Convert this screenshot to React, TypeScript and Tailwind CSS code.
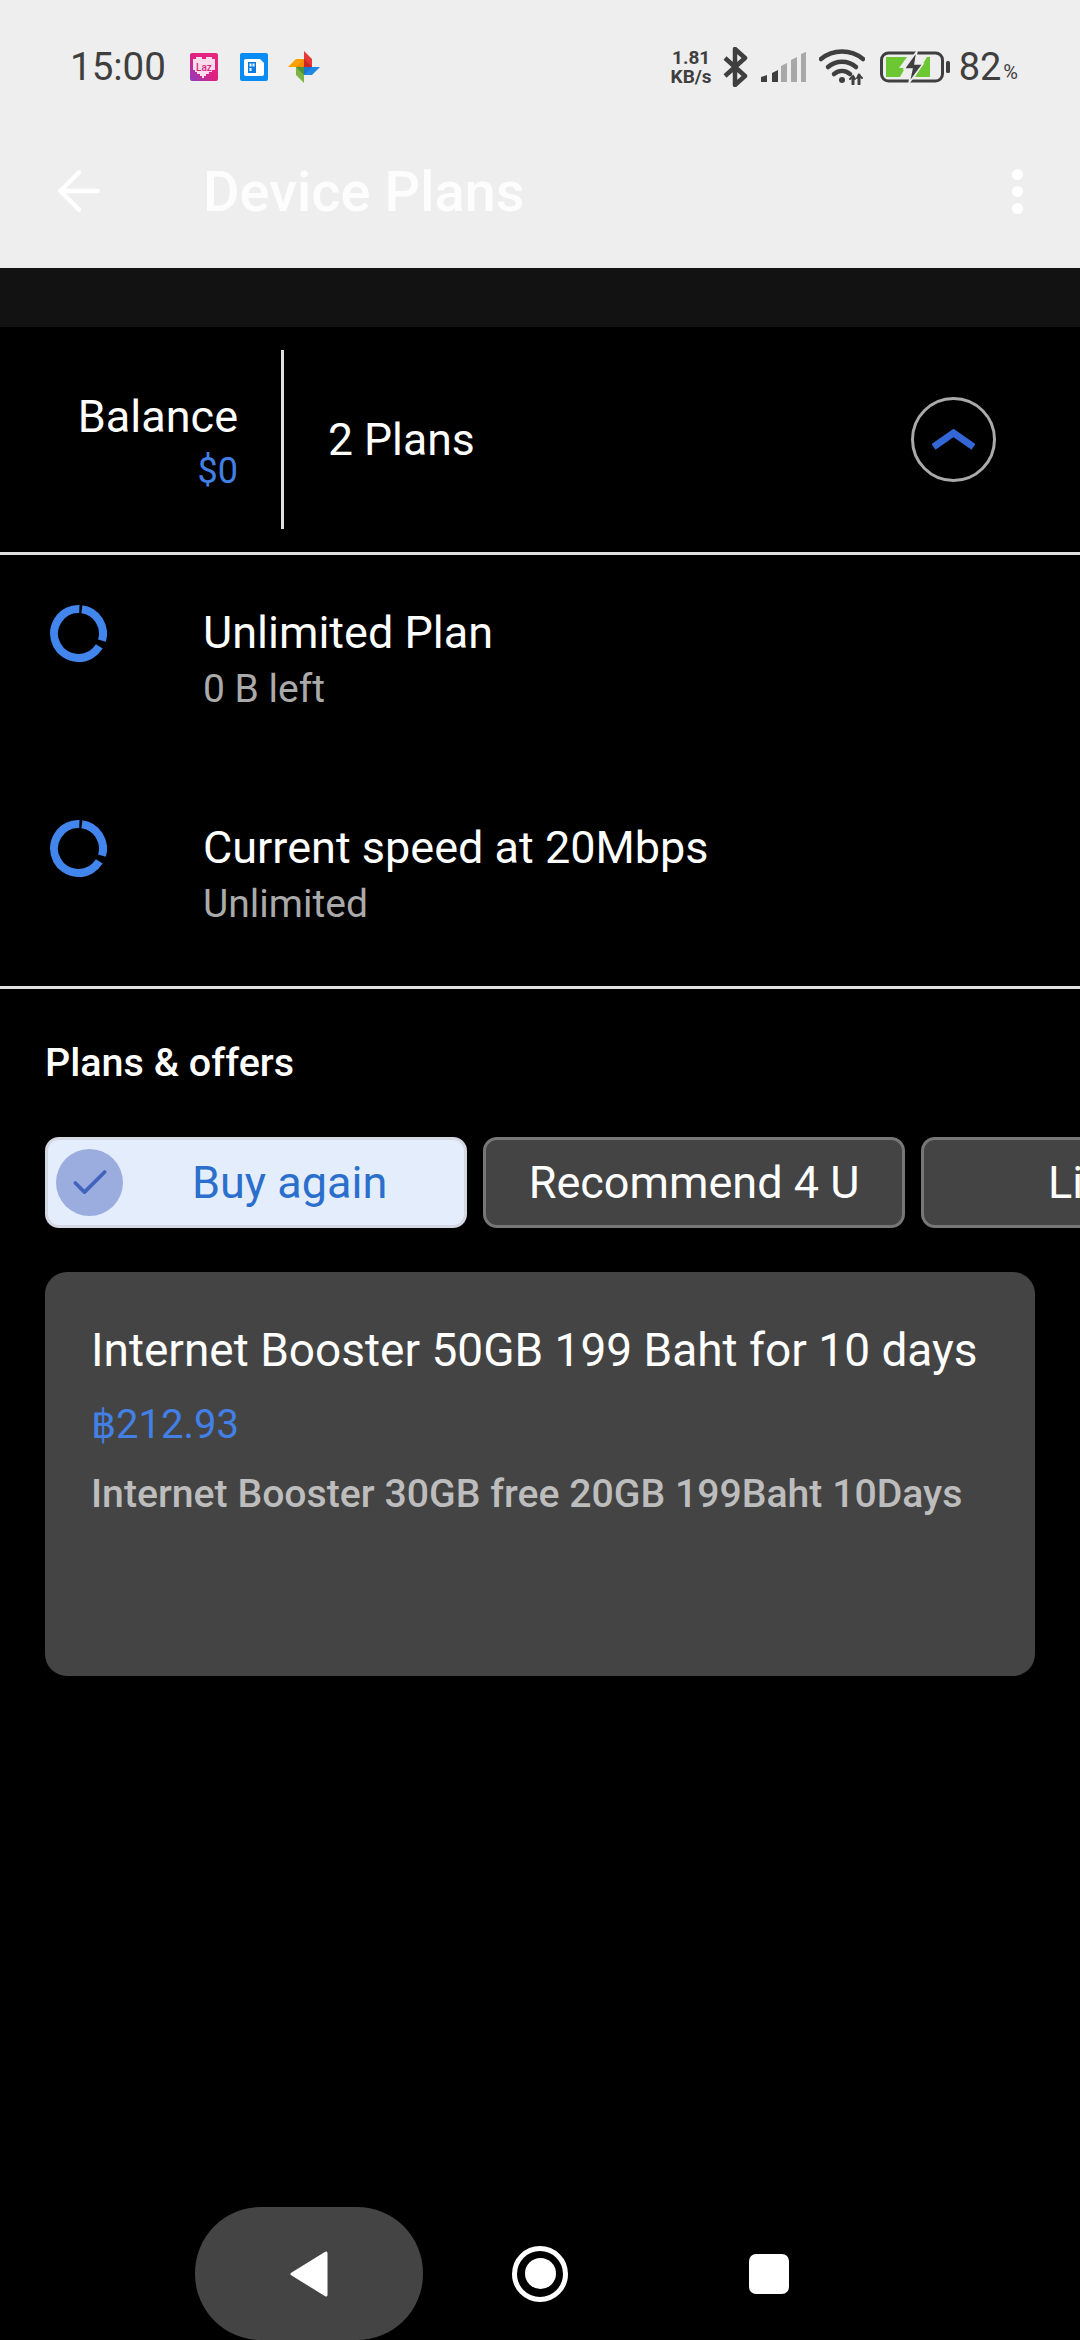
import { ArrowLeft, Check } from 'lucide-react';

const PLANS = [
  { id: 1, title: 'Unlimited Plan', sub: '0 B left' },
  { id: 2, title: 'Current speed at 20Mbps', sub: 'Unlimited' },
];

function LazIcon() {
  return (
    <svg width="28" height="28" viewBox="0 0 28 28">
      <defs>
        <linearGradient id="laz" x1="0" y1="1" x2="1" y2="0">
          <stop offset="0" stopColor="#8b3fc0" />
          <stop offset="0.5" stopColor="#e0207f" />
          <stop offset="1" stopColor="#e62a80" />
        </linearGradient>
      </defs>
      <rect width="28" height="28" rx="2" fill="url(#laz)" />
      <path d="M3 6h3V4h6v2h4V4h6v2h3v11h-3v2h-3v2h-3v2h-2v2h-2v-2h-2v-2H7v-2H5v-2H3z" fill="#fbdcec" />
      <text x="14" y="18" textAnchor="middle" fontSize="10" fontWeight="500" fill="#d8247f" fontFamily="Roboto, sans-serif">Laz</text>
    </svg>
  );
}

function SimIcon() {
  return (
    <svg width="28" height="28" viewBox="0 0 28 28">
      <rect width="28" height="28" rx="2" fill="#0a8cf5" />
      <path d="M4 8a2 2 0 0 1 2-2h14l4 4v11a2 2 0 0 1-2 2H6a2 2 0 0 1-2-2z" fill="#fff" />
      <rect x="8" y="9" width="8" height="11" fill="#0a7be0" />
      <rect x="9.5" y="10.5" width="2" height="3" fill="#fff" />
      <rect x="12.5" y="10.5" width="2" height="3" fill="#fff" />
      <rect x="9.5" y="15" width="2" height="3" fill="#fff" />
    </svg>
  );
}

function PinwheelIcon() {
  return (
    <svg width="32" height="32" viewBox="0 0 32 32">
      <path d="M16 0l8 8v8h-8z" fill="#e53935" />
      <path d="M32 16l-8 8h-8v-8z" fill="#1e88e5" />
      <path d="M16 32l-8-8v-8h8z" fill="#7cb342" />
      <path d="M0 16l8-8h8v8z" fill="#ffa000" />
      <path d="M16 16h8l-8 8z" fill="#1565c0" opacity="0.5" />
      <path d="M16 16v8l-8-8z" fill="#2e7d32" opacity="0.6" />
      <path d="M16 16H8l8-8z" fill="#f57c00" opacity="0.6" />
      <path d="M16 16V8l8 8z" fill="#b71c1c" opacity="0.6" />
    </svg>
  );
}

function BluetoothIcon() {
  return (
    <svg width="25" height="40" viewBox="0 0 25 40" fill="none" stroke="#3f3f3f" strokeWidth="4.5" strokeLinejoin="round">
      <path d="M2 11l20 18-10 9V2l10 9L2 29" />
    </svg>
  );
}

function SignalIcon() {
  return (
    <svg width="45" height="30" viewBox="0 0 45 30">
      <path d="M0 25l6-2v7H0z" fill="#3f3f3f" />
      <path d="M11 21l6-3v12h-6z" fill="#3f3f3f" />
      <path d="M20 14l6-3v19h-6z" fill="#a8a8a8" />
      <path d="M30 8l6-3v25h-6z" fill="#a8a8a8" />
      <path d="M40 2l5-2v30h-5z" fill="#a8a8a8" />
    </svg>
  );
}

function WifiIcon() {
  return (
    <svg width="46" height="36" viewBox="0 0 46 36" fill="none" stroke="#3f3f3f" strokeWidth="4.5" strokeLinecap="round">
      <path d="M2 10C14 0 32 0 44 10" />
      <path d="M9 18c8-7 20-7 28 0" />
      <path d="M15 25c5-4 11-4 16 0" />
      <circle cx="23" cy="31" r="3" fill="#3f3f3f" stroke="none" />
      <path d="M34 35v-7M40 35v-9" strokeWidth="3" />
      <path d="M31 30l3-3 2 3M38 29l2-3 3 3" strokeWidth="2" />
    </svg>
  );
}

function BatteryIcon() {
  return (
    <svg width="71" height="32" viewBox="0 0 71 32">
      <rect x="1.5" y="2" width="61" height="28" rx="7" fill="none" stroke="#3f3f3f" strokeWidth="3" />
      <path d="M6 6h21l-8 11h6l-5 9H6z" fill="#6cc832" />
      <path d="M47 6h3v20H35z" fill="#6cc832" />
      <path d="M37 0L24 18h8l-3 14 14-19h-8z" fill="#3f3f3f" stroke="#eeeeee" strokeWidth="1.5" />
      <rect x="66" y="10" width="4" height="12" rx="1.5" fill="#3f3f3f" />
    </svg>
  );
}

function Ring() {
  return (
    <svg width="57" height="57" viewBox="0 0 57 57" fill="none" stroke="#4285ec" strokeWidth="8" className="shrink-0">
      <path d="M31.9 4.24A24.5 24.5 0 0 1 51.93 35.66" />
      <path d="M49.28 41.48A24.5 24.5 0 1 1 29.35 4.01" />
    </svg>
  );
}

function StatusBar() {
  return (
    <div className="flex h-[134px] items-center text-[#3f3f3f]">
      <span className="ml-[70px] text-[38.5px] leading-none">15:00</span>
      <div className="ml-[24px] flex items-center gap-[22px]">
        <LazIcon />
        <SimIcon />
      </div>
      <div className="ml-[20px]">
        <PinwheelIcon />
      </div>
      <div className="ml-auto flex items-center pr-[62px]">
        <div className="flex flex-col items-center text-[19px] leading-[19px] font-bold">
          <span>1.81</span>
          <span>KB/s</span>
        </div>
        <div className="ml-[11px]">
          <BluetoothIcon />
        </div>
        <div className="ml-[13px]">
          <SignalIcon />
        </div>
        <div className="ml-[13px]">
          <WifiIcon />
        </div>
        <div className="ml-[15px]">
          <BatteryIcon />
        </div>
        <span className="ml-[8px] text-[38px] leading-none">82</span>
        <span className="mt-[10px] ml-[2px] text-[20px] leading-none">%</span>
      </div>
    </div>
  );
}

function ChipRow() {
  return (
    <div className="mt-[52px] flex gap-[16px] overflow-hidden pl-[45px] text-[45px] leading-none">
      <div className="flex h-[91px] w-[422px] shrink-0 items-center rounded-[14px] border-[3px] border-[#d3d8e2] bg-[#e4edfb] pl-[8px]">
        <div className="flex h-[67px] w-[67px] items-center justify-center rounded-full bg-[#9badde]">
          <Check className="h-[44px] w-[44px] text-[#4263bd]" strokeWidth={2} />
        </div>
        <span className="ml-[69px] text-[#2a6fcb]">Buy again</span>
      </div>
      <div className="flex h-[91px] w-[422px] shrink-0 items-center justify-center rounded-[14px] border-[3px] border-[#777777] bg-[#444444] text-white">
        Recommend 4 U
      </div>
      <div className="flex h-[91px] w-[422px] shrink-0 items-center rounded-[14px] border-[3px] border-[#777777] bg-[#444444] pl-[124px] text-white">
        Limited
      </div>
    </div>
  );
}

export default function App() {
  return (
    <div className="flex h-[2340px] w-[1080px] flex-col overflow-hidden bg-black font-['Roboto',sans-serif] text-white">
      <header className="h-[268px] bg-[#eeeeee]">
        <StatusBar />
        <div className="flex h-[114px] items-center">
          <ArrowLeft className="ml-[47px] h-[64px] w-[64px] text-white" strokeWidth={1.7} />
          <h1 className="mt-[2px] ml-[92px] text-[56px] leading-none font-medium text-[#fdfdfd]">Device Plans</h1>
          <div className="mr-[57px] ml-auto flex flex-col gap-[6px]">
            <div className="h-[11px] w-[11px] rounded-full bg-white" />
            <div className="h-[11px] w-[11px] rounded-full bg-white" />
            <div className="h-[11px] w-[11px] rounded-full bg-white" />
          </div>
        </div>
      </header>
      <div className="h-[59px] bg-[#121212]" />

      <section className="flex h-[225px] items-center">
        <div className="mt-[5px] flex w-[238px] flex-col items-end">
          <span className="text-[45px] leading-[52px]">Balance</span>
          <span className="mt-[6px] text-[36px] leading-[44px] text-[#4280e6]">$0</span>
        </div>
        <div className="ml-[43px] h-[179px] w-[3px] bg-[#e0e0e0]" />
        <span className="mt-[2px] ml-[44px] text-[44.5px] leading-none">2 Plans</span>
        <div className="mr-[84px] ml-auto flex h-[85px] w-[85px] items-center justify-center rounded-full border-[3px] border-[#aaaaaa]">
          <svg width="43" height="21" viewBox="0 0 43 21" fill="none" stroke="#3367d6" strokeWidth="7">
            <path d="M1.5 18L21.5 4L41.5 18" />
          </svg>
        </div>
      </section>
      <div className="h-[3px] bg-[#e0e0e0]" />

      <section className="h-[431px] pt-[50px]">
        {PLANS.map((plan) => (
          <div key={plan.id} className="flex h-[215px] items-start pl-[50px]">
            <Ring />
            <div className="mt-[2px] ml-[96px] flex flex-col">
              <span className="text-[45px] leading-[52px]">{plan.title}</span>
              <span className="mt-[8px] text-[39px] leading-[44px] text-[#aaaaaa]">{plan.sub}</span>
            </div>
          </div>
        ))}
      </section>
      <div className="h-[3px] bg-[#e0e0e0]" />

      <h2 className="mt-[52px] pl-[45px] text-[39.5px] leading-[44px] font-medium">Plans &amp; offers</h2>
      <ChipRow />

      <div className="mx-[45px] mt-[44px] h-[404px] rounded-[22px] bg-[#444444] px-[46px] pt-[52px]">
        <p className="text-[46px] leading-[52px]">Internet Booster 50GB 199 Baht for 10 days</p>
        <p className="mt-[26px] text-[40px] leading-[46px] text-[#4280e6]">฿212.93</p>
        <p className="mt-[24px] text-[39.2px] leading-[44px] font-medium text-[#bdbdbd]">Internet Booster 30GB free 20GB 199Baht 10Days</p>
      </div>

      <nav className="mt-auto flex h-[133px] items-center">
        <div className="ml-[195px] flex h-[133px] w-[228px] items-center justify-center rounded-[66px] bg-[#444444]">
          <svg width="40" height="48" viewBox="0 0 40 48">
            <path d="M37 3v42L3 24z" fill="#fff" stroke="#fff" strokeWidth="3" strokeLinejoin="round" />
          </svg>
        </div>
        <div className="ml-[89px] flex h-[56px] w-[56px] items-center justify-center rounded-full border-[5px] border-white">
          <div className="h-[31px] w-[31px] rounded-full bg-white" />
        </div>
        <div className="ml-[181px] h-[40px] w-[40px] rounded-[7px] bg-white" />
      </nav>
    </div>
  );
}
